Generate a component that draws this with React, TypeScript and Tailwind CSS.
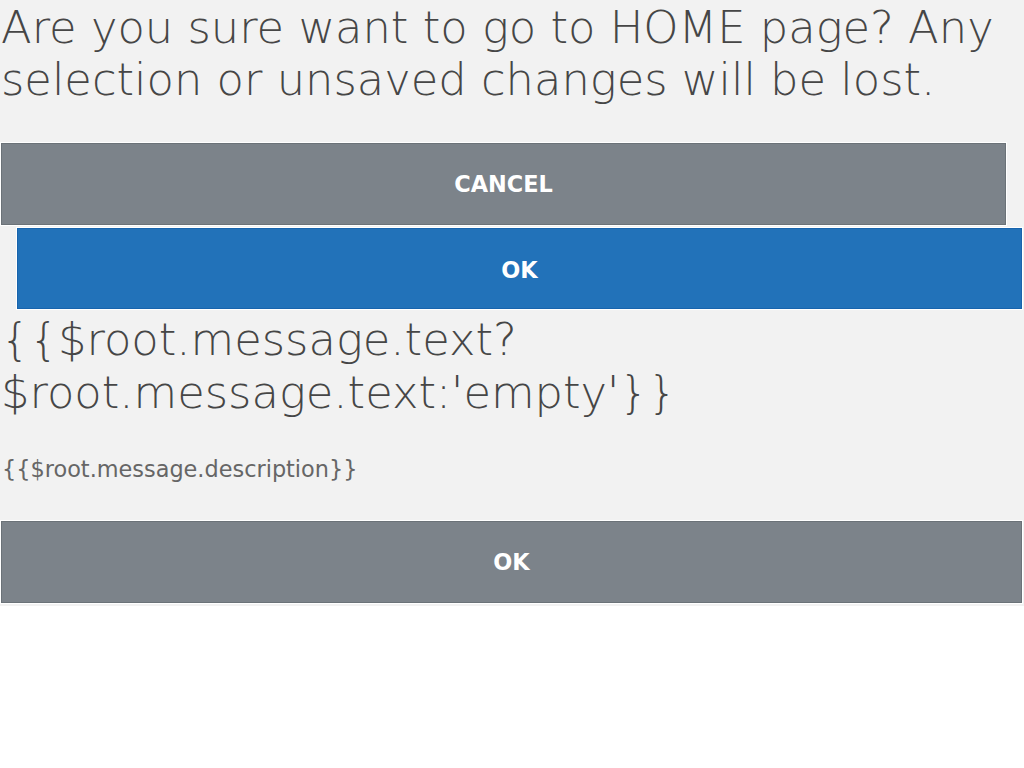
export default function App() {
  return (
    <div className="w-[1024px] min-h-[768px] bg-white">
      <div className="bg-[#f2f2f2] pt-[2px] pb-[3px]" style={{ fontFamily: '"DejaVu Sans", sans-serif' }}>
        <p className="px-[1px] text-[44.8px] leading-[52px] font-extralight text-[#464646]">
          Are you sure want to go to HOME page? Any selection or unsaved changes will be lost.
        </p>
        <div className="mt-[37px] flex flex-col">
          <button className="ml-[1px] w-[1005px] h-[82px] pt-[2px] bg-[#7c838a] border border-[#6b7278] ring-1 ring-white text-white text-[22.4px] font-bold">
            CANCEL
          </button>
          <button className="mt-[3px] ml-[17px] w-[1005px] h-[81px] pt-[4px] bg-[#2272b9] border border-[#1864ad] ring-1 ring-white text-white text-[22.4px] font-bold">
            OK
          </button>
        </div>
        <p className="mt-[4px] px-[1px] text-[44.8px] leading-[53px] font-extralight text-[#464646]">
          {"{{$root.message.text? $root.message.text:'empty'}}"}
        </p>
        <p className="mt-[38px] px-[2px] text-[22.4px] leading-[24px] text-[#666666]">
          {"{{$root.message.description}}"}
        </p>
        <button className="mt-[40px] mx-[1px] w-[1021px] h-[82px] pt-[2px] bg-[#7c838a] border border-[#6b7278] ring-1 ring-white text-white text-[22.4px] font-bold">
          OK
        </button>
      </div>
    </div>
  );
}
